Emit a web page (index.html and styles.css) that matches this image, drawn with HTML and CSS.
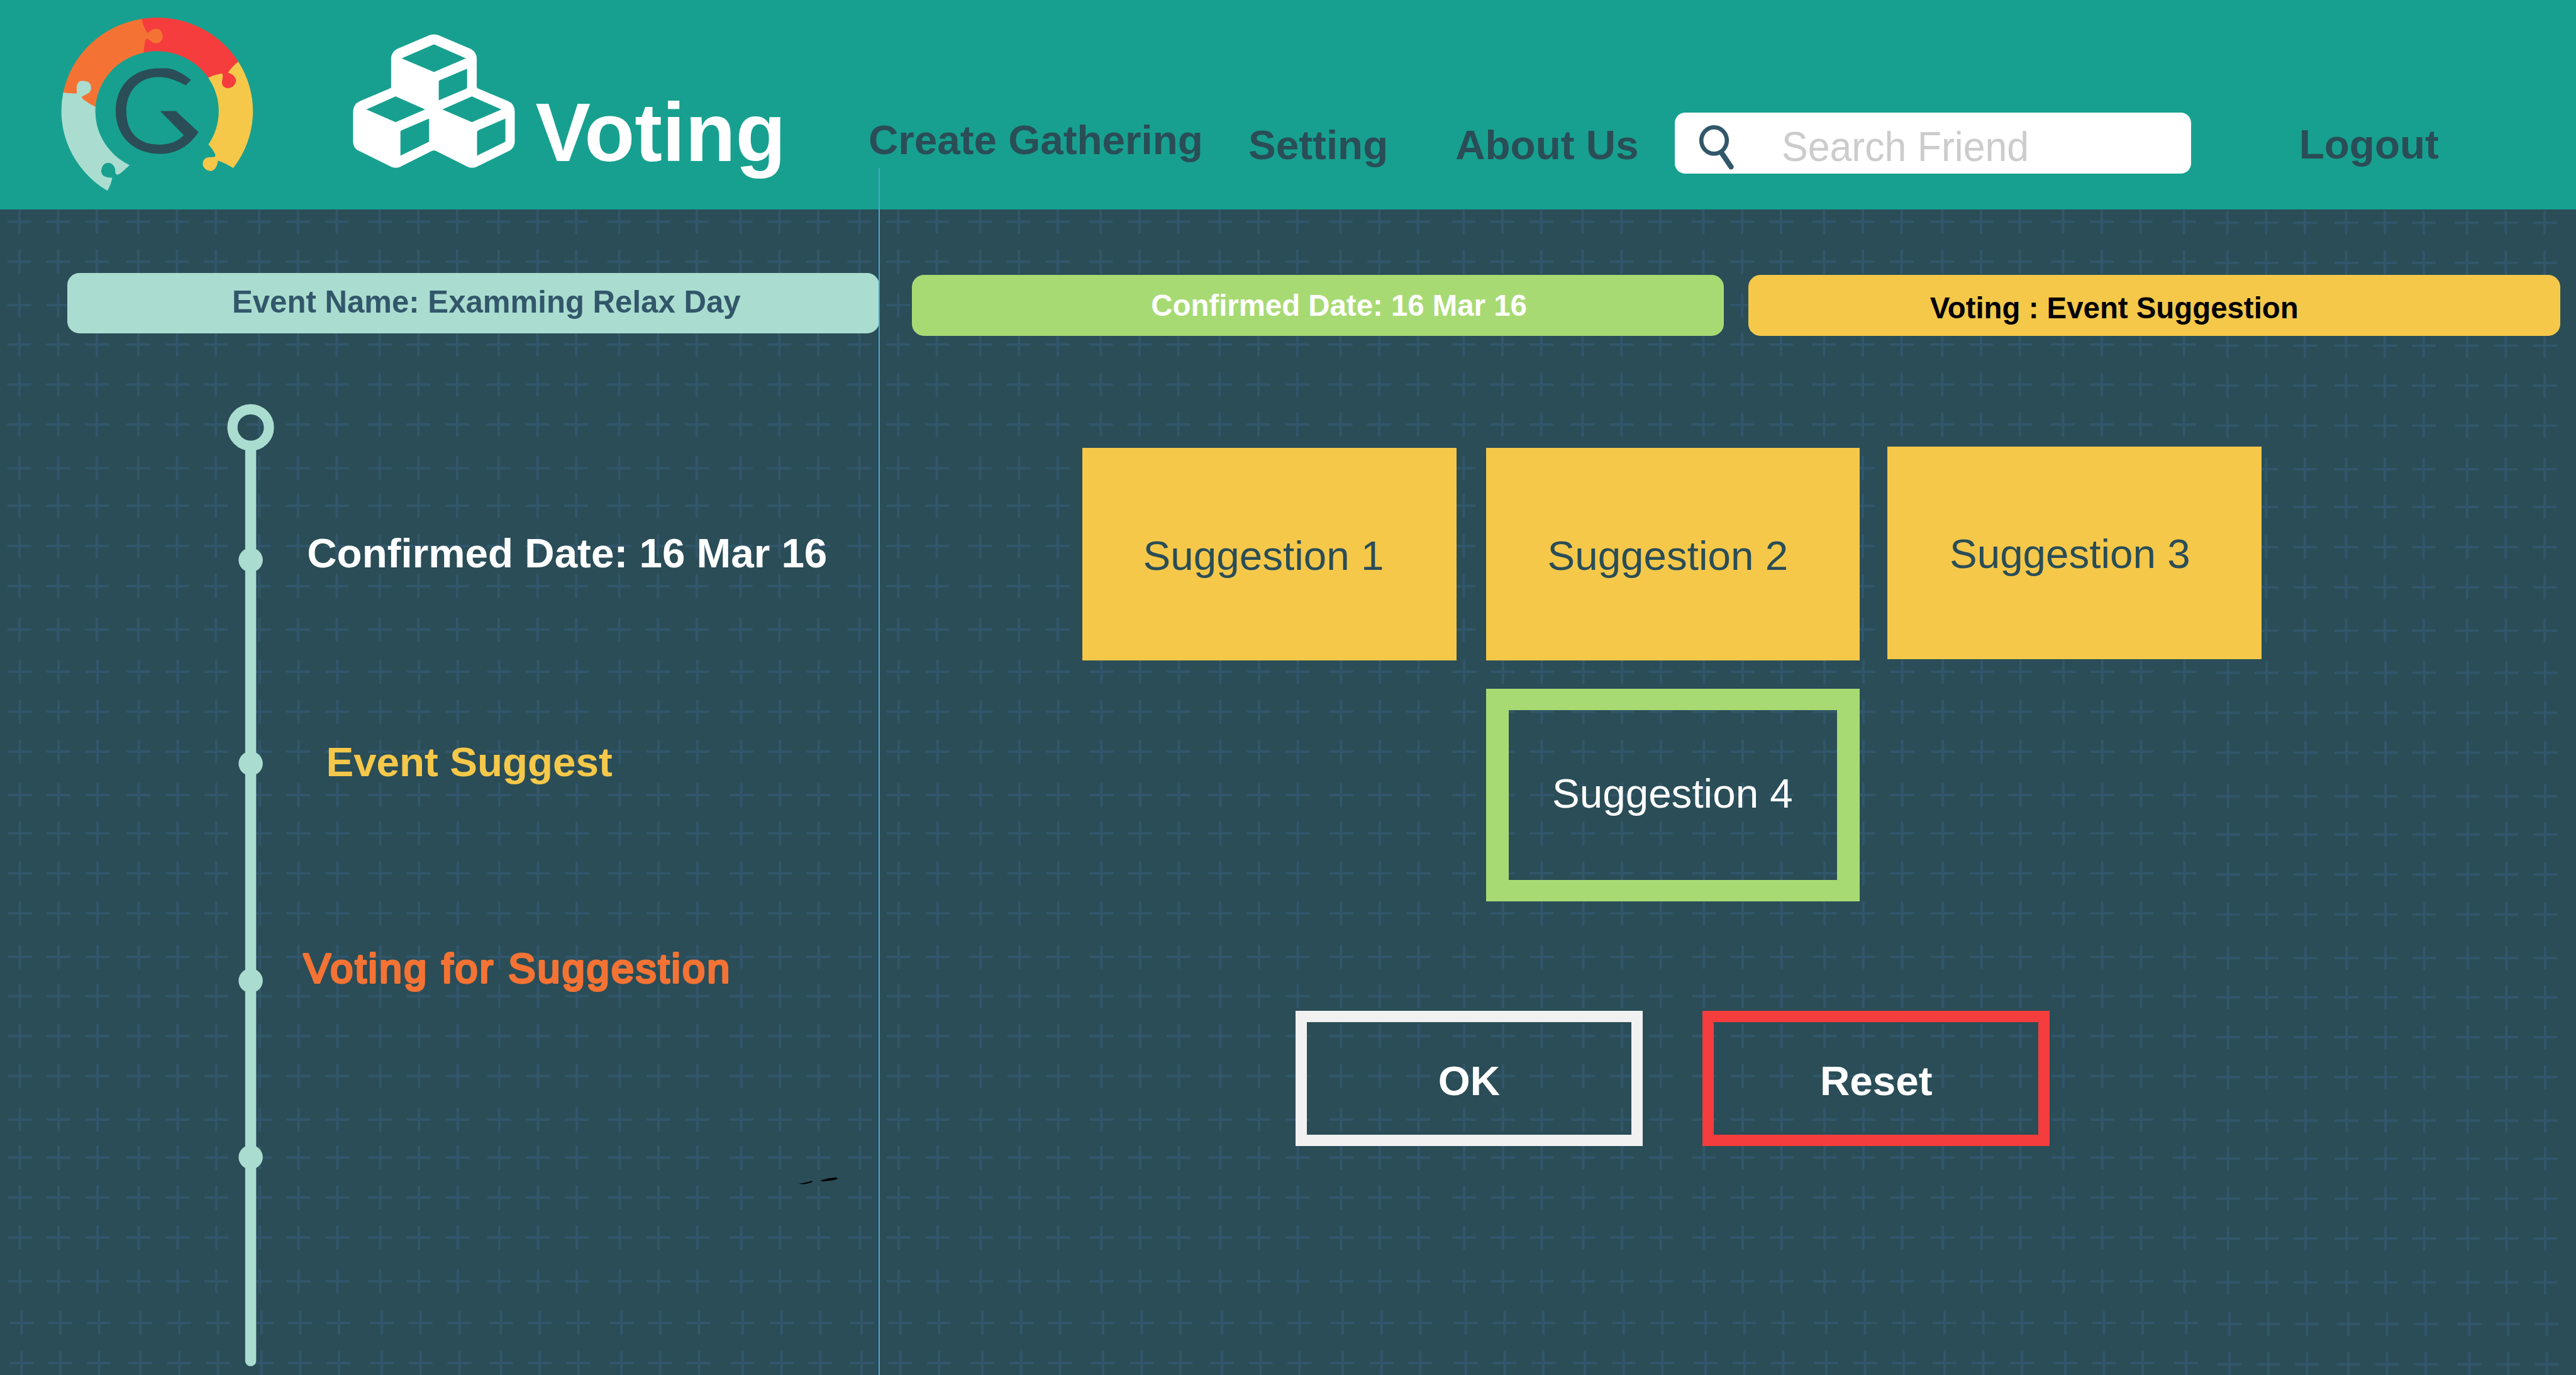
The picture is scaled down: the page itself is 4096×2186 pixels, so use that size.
FILE: index.html
```html
<!DOCTYPE html>
<html lang="en">
<head>
<meta charset="utf-8">
<title>Voting</title>
<link rel="stylesheet" href="styles.css">
</head>
<body>
<svg class="lattice" viewBox="0 0 4685 2500" aria-hidden="true">
  <defs>
    <path id="one" d="M-20 0h40M0-20v40"/>
    <path id="tri" d="M-20 0h40M0-20v40M50.500 0h40M70.500-20v40M121 0h40M141-20v40"/>
    <g id="row">
      <use href="#tri" x="35.200"/><use href="#tri" x="251.500"/><use href="#tri" x="471.400"/><use href="#tri" x="690.500"/>
      <use href="#tri" x="907"/><use href="#tri" x="1126.200"/><use href="#tri" x="1347"/><use href="#tri" x="1563"/>
      <use href="#tri" x="1782.700"/><use href="#tri" x="2002"/><use href="#tri" x="2218.300"/><use href="#tri" x="2438"/>
      <use href="#tri" x="2662"/><use href="#tri" x="2878.500"/><use href="#tri" x="3098"/><use href="#tri" x="3317.500"/>
      <use href="#tri" x="3532.500"/><use href="#tri" x="3752"/><use href="#one" x="3972"/>
      <use href="#tri" x="4051" y="2"/><use href="#tri" x="4267" y="2"/><use href="#tri" x="4487" y="2"/>
    </g>
  </defs>
  <use href="#row" y="403.300"/><use href="#row" y="476"/><use href="#row" y="555"/><use href="#row" y="626.500"/>
  <use href="#row" y="699.300"/><use href="#row" y="772"/><use href="#row" y="851.300"/><use href="#row" y="919.800"/>
  <use href="#row" y="993"/><use href="#row" y="1065.800"/><use href="#row" y="1144.900"/>
  <use href="#row" x="1" y="1221.400"/><use href="#row" x="1" y="1294.200"/><use href="#row" x="1" y="1366.800"/>
  <use href="#row" x="1" y="1446"/><use href="#row" x="1" y="1515.300"/><use href="#row" x="1" y="1588"/>
  <use href="#row" x="1" y="1660.800"/><use href="#row" x="1" y="1740"/><use href="#row" x="1" y="1811.400"/>
  <use href="#row" x="1" y="1884"/><use href="#row" x="1" y="1956.600"/><use href="#row" x="1" y="2035.800"/>
  <use href="#row" x="1" y="2105"/><use href="#row" x="1" y="2177.700"/><use href="#row" x="1" y="2250.300"/>
  <use href="#row" x="1" y="2329.700"/><use href="#row" x="4" y="2405.700"/><use href="#row" x="4" y="2478.700"/>
</svg>

<header class="topbar">
  <svg class="logo" viewBox="0 0 1260 1140" aria-label="G logo">
    <path fill="#f5c84a" d="M1060 336A523 510 0 0 1 1032 917C1005 900 975 885 949 877C946 905 933 930 911 933C885 931 866 915 866 892C868 868 885 858 905 858C915 857 930 858 935 852C938 845 925 818 897 788A336 327 0 0 0 896 424Z"/>
    <path fill="#f53d3d" d="M532 103A523 510 0 0 1 1060 336C1040 352 1020 370 1004 396C1035 405 1048 425 1048 443C1040 470 1025 480 1004 481C980 480 970 465 971 445C975 425 977 410 973 403C965 400 930 408 896 424A336 327 0 0 0 544 287Z"/>
    <path fill="#f47334" d="M105 504A523 510 0 0 1 532 103C538 130 548 155 564 181C575 173 588 158 612 157C640 157 647 185 648 203C640 228 628 236 612 237C588 237 578 215 562 211C548 212 549 245 544 287A336 327 0 0 0 281 583Z"/>
    <path fill="#aaddd0" d="M105 504C130 508 150 510 180 510C175 470 178 443 209 441C240 441 257 452 257 480C255 518 205 518 206 531C208 542 250 567 281 583A336 327 0 0 0 467 901C440 925 415 953 400 953C384 953 392 925 384 912C375 895 365 889 349 889C325 889 314 910 312 936C315 960 335 970 372 969C370 990 360 1015 346 1041A523 510 0 0 1 105 504Z"/>
    <path fill="#2a4d57" d="M802 436C755 400 715 372 660 372H632C480 372 391 470 391 606C391 745 490 840 633 840C720 840 790 800 843 721L719 606H633L763 738C730 770 690 789 631 789C515 789 449 725 449 606C449 490 525 420 622 420C680 420 725 440 773 466Z"/>
  </svg>
  <svg class="cubes" viewBox="0 0 637 990" preserveAspectRatio="none" aria-hidden="true">
    <path fill="#fff" fill-rule="evenodd" d="M330 102Q344 96 358 102L466 178Q486 196 486 232V385Q486 391 492 395L590 462Q612 478 612 520V690Q610 715 597 731L484 822Q470 830 457 822L352 735Q344 729 336 735L231 822Q217 830 204 822L92 731Q78 718 76 688V520Q76 478 99 462L196 395Q202 391 202 385V232Q202 196 222 178ZM344 153L450 229L344 304L237 229ZM454 286V386Q454 393 449 396L360 458V355Q360 351 364 348ZM217 437L315 508L217 577L120 508ZM470 437L568 508L470 577L372 508ZM328 558V680Q328 685 323 688L233 760V630Q233 624 238 621ZM581 558V680Q581 685 576 688L487 760V632Q487 624 493 620Z"/>
  </svg>
  <h1 class="title">Voting</h1>
  <a class="nav nav-create">Create Gathering</a>
  <a class="nav">Setting</a>
  <a class="nav">About Us</a>
  <div class="search">
    <svg class="search-icon" viewBox="0 0 66 84" aria-hidden="true">
      <path d="M42 52L59 77" stroke="#32576a" stroke-width="9.500" stroke-linecap="round"/>
      <ellipse cx="28" cy="29" rx="23.200" ry="24" fill="none" stroke="#32576a" stroke-width="7.600"/>
    </svg>
    <span class="search-text">Search Friend</span>
  </div>
  <a class="nav nav-logout">Logout</a>
</header>

<main>
  <div class="bars">
    <div class="bar bar-event">Event Name: Examming Relax Day</div>
    <div class="bar bar-date">Confirmed Date: 16 Mar 16</div>
    <div class="bar bar-voting">Voting : Event Suggestion</div>
  </div>
  <div class="content">
    <section class="timeline">
      <svg class="track" viewBox="0 0 86 1752" aria-hidden="true">
        <path d="M43 80V1740" stroke="#aaddd0" stroke-width="20" stroke-linecap="round"/>
        <circle cx="43" cy="43" r="33.200" fill="none" stroke="#aaddd0" stroke-width="18.500"/>
        <g fill="#aaddd0"><circle cx="43" cy="284" r="22"/><circle cx="43" cy="654" r="22"/><circle cx="43" cy="1049" r="22"/><circle cx="43" cy="1370" r="22"/></g>
      </svg>
      <div class="steps">
        <p class="step step-date">Confirmed Date: 16 Mar 16</p>
        <p class="step step-suggest">Event Suggest</p>
        <svg class="step-voting" viewBox="0 0 900 140"><text x="3" y="86" textLength="775">Voting for Suggestion</text></svg>
        <svg class="marks" viewBox="0 0 80 20" aria-hidden="true"><path d="M3 15L15 13L28 9.500V12L15 15.500H9ZM43 8.500L58 5L72 3.500L75 5.500L68 8L48 11Z"/></svg>
      </div>
    </section>
    <section class="panel">
      <div class="cards">
        <div class="card">Suggestion 1</div>
        <div class="card card-second">Suggestion 2</div>
        <div class="card card-third">Suggestion 3</div>
        <div class="card card-selected">Suggestion 4</div>
      </div>
      <div class="actions">
        <button class="btn btn-ok">OK</button>
        <button class="btn btn-reset">Reset</button>
      </div>
    </section>
  </div>
</main>
<div class="divider"></div>
</body>
</html>
```
FILE: styles.css
```css
/* 1rem is 1/46.85 of the window width, so the page scales as a whole */
html {
  font-size: calc(100vw / 46.85);
}

body {
  margin: 0;
  position: relative;
  height: 100vh;
  overflow: hidden;
  background: #2a4d57;
  font-family: "Liberation Sans", Arial, sans-serif;
  line-height: 1;
}

svg {
  display: block;
}

.lattice {
  position: absolute;
  left: 0;
  top: 0;
  z-index: -1;
  width: 46.85rem;
  height: 25rem;
  fill: none;
  stroke: #32566a;
  stroke-width: 4.8;
  stroke-linecap: round;
}

.topbar {
  display: grid;
  grid-template-columns: 5.2rem 3.74rem 6.055rem 6.91rem 3.765rem 3.99rem 11.355rem 1fr;
  align-items: start;
  box-sizing: border-box;
  height: 3.81rem;
  padding-left: 0.8rem;
  background: #17a08f;
  white-space: nowrap;
}

.logo {
  width: 4.2rem;
  height: 3.8rem;
}

.cubes {
  width: 3.494rem;
  height: 3.3rem;
  margin-top: 0.3rem;
}

.title {
  margin: 1.66rem 0 0;
  font-size: 1.5rem;
  color: #fff;
}

.nav {
  margin-top: 2.265rem;
  font-size: 0.75rem;
  font-weight: bold;
  color: #2a4d57;
}

.nav-create {
  margin-top: 2.17rem;
}

.nav-logout {
  margin-top: 2.25rem;
}

.search {
  display: flex;
  width: 9.395rem;
  height: 1.11rem;
  margin-top: 2.05rem;
  border-radius: 0.19rem;
  background: #fff;
}

.search-icon {
  width: 0.66rem;
  height: 0.84rem;
  margin: 0.21rem 0 0 0.43rem;
}

.search-text {
  margin: 0.235rem 0 0 0.85rem;
  font-size: 0.76rem;
  color: #ccc;
  transform: scaleX(0.942);
  transform-origin: left;
}

.bars {
  display: flex;
  height: 1.14rem;
  padding: 1.15rem 0 0 1.22rem;
}

.bar {
  box-sizing: border-box;
  width: 14.77rem;
  height: 1.105rem;
  border-radius: 0.22rem;
  font-size: 0.542rem;
  font-weight: bold;
  white-space: nowrap;
}

.bar-event {
  padding: 0.247rem 0 0 3rem;
  background: #aaddd0;
  font-size: 0.5625rem;
  color: #32576a;
}

.bar-date {
  margin: 0.04rem 0 0 0.595rem;
  padding: 0.285rem 0 0 4.35rem;
  background: #a8da74;
  color: #fff;
}

.bar-voting {
  margin: 0.04rem 0 0 0.445rem;
  padding: 0.328rem 0 0 3.3rem;
  background: #f5c84a;
  color: #000;
}

.content {
  display: flex;
}

.timeline {
  display: flex;
  width: 15.99rem;
}

.track {
  width: 0.86rem;
  height: 17.52rem;
  margin: 1.245rem 0 0 4.13rem;
}

.steps {
  display: flex;
  flex-direction: column;
  padding: 3.585rem 0 0 0.505rem;
}

.step {
  margin: 0;
  font-size: 0.75rem;
  font-weight: bold;
  white-space: nowrap;
}

.step-date {
  margin-left: 0.09rem;
  color: #fff;
}

.step-suggest {
  margin: 3.05rem 0 0 0.435rem;
  color: #f5c84a;
}

.step-voting {
  width: 9rem;
  height: 1.4rem;
  margin-top: 2.77rem;
  fill: #f47334;
  stroke: #f47334;
  stroke-width: 4.5;
  stroke-linejoin: round;
  font-size: 74px;
}

.marks {
  width: 0.8rem;
  height: 0.2rem;
  margin: 2.97rem 0 0 9rem;
  fill: #000;
}

.panel {
  padding: 2.043rem 0 0 3.695rem;
}

.cards {
  display: grid;
  grid-template-columns: 7.338rem 7.305rem 6.8rem;
  row-gap: 0.525rem;
}

.card {
  box-sizing: border-box;
  width: 6.8rem;
  height: 3.862rem;
  padding: 1.59rem 0 0 1.105rem;
  background: #f5c84a;
  font-size: 0.75rem;
  color: #2a4d57;
  white-space: nowrap;
}

.card-second {
  padding-left: 1.12rem;
}

.card-third {
  margin-top: -0.019rem;
  padding: 1.575rem 0 0 1.13rem;
}

.card-selected {
  grid-column: 2;
  border: solid #a8da74;
  border-width: 0.39rem 0.415rem;
  padding: 1.135rem 0 0 0.795rem;
  background: none;
  color: #fff;
}

.actions {
  display: flex;
  gap: 1.09rem;
  margin: 1.99rem 0 0 3.875rem;
}

.btn {
  width: 6.315rem;
  height: 2.46rem;
  padding: 0.1rem 0 0;
  border: 0.21rem solid #f1f1f1;
  background: none;
  font: bold 0.75rem/1 "Liberation Sans", Arial, sans-serif;
  color: #fff;
}

.btn-reset {
  border-color: #f53d3d;
}

/* hairline running from the header down between timeline and panel */
.divider {
  position: absolute;
  left: 15.98rem;
  top: 3.05rem;
  bottom: 0;
  width: 0.02rem;
  background: #4ba3cf;
}
```
